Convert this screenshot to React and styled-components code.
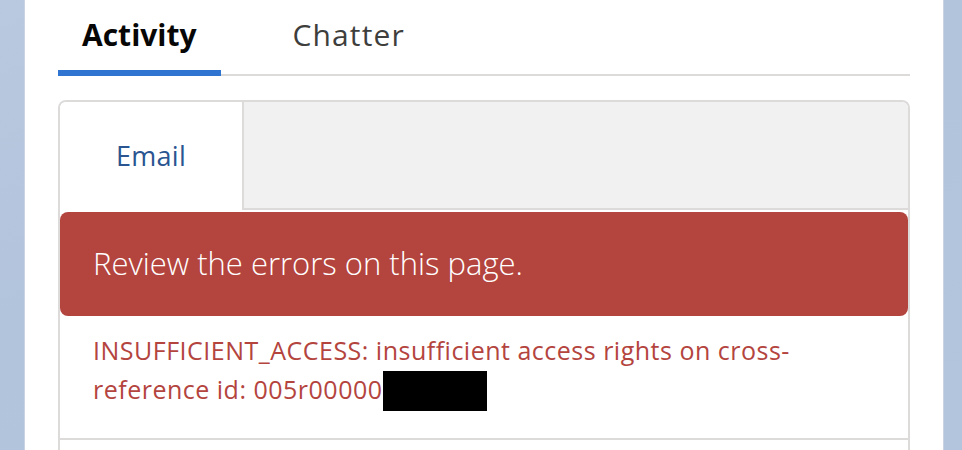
import React from "react"
import styled, { createGlobalStyle } from "styled-components"

const GlobalStyle = createGlobalStyle`
  html, body {
    margin: 0;
    padding: 0;
    background: #b3c4dd;
    font-family: "Open Sans", "Liberation Sans", sans-serif;
  }
`

const App = () => {
  return (
    <>
      <GlobalStyle />
      <Page>
        <Panel>
          <TabBar>
            <MainTab active>Activity</MainTab>
            <MainTab>Chatter</MainTab>
          </TabBar>
          <Card>
            <SubTabs>
              <SubTab>Email</SubTab>
              <SubTabFiller />
            </SubTabs>
            <ErrorBanner>Review the errors on this page.</ErrorBanner>
            <ErrorDetail>
              INSUFFICIENT_ACCESS: insufficient access rights on cross-
              <br />
              reference id: 005r00000
              <Redacted />
            </ErrorDetail>
            <NextRow />
          </Card>
        </Panel>
      </Page>
    </>
  )
}

const Page = styled.div`
  display: flex;
  height: 450px;
  overflow: hidden;
  padding: 0 18px 0 24px;
  background: linear-gradient(160deg, #b9c9df 0%, #b2c3dc 40%, #b3c4dd 100%);
`

const Panel = styled.main`
  flex: 1;
  background: #ffffff;
  border-left: 1px solid #c9d3e1;
  border-right: 1px solid #c9d3e1;
  padding: 0 33px;
  display: flex;
  flex-direction: column;
`

const TabBar = styled.nav`
  display: flex;
  gap: 48px;
  height: 76px;
  box-sizing: border-box;
  border-bottom: 2px solid #dddbda;
`

const MainTab = styled.div`
  padding: 0 24px 2px;
  height: 76px;
  box-sizing: border-box;
  display: flex;
  align-items: center;
  font-size: 30px;
  font-weight: ${(p) => (p.active ? 700 : 400)};
  letter-spacing: ${(p) => (p.active ? "0" : "1.1px")};
  color: ${(p) => (p.active ? "#080707" : "#3e3e3c")};
  border-bottom: 6px solid ${(p) => (p.active ? "#2e74d0" : "transparent")};
`

const Card = styled.section`
  margin-top: 24px;
  flex: 1;
  border: 2px solid #dddbda;
  border-bottom: none;
  border-radius: 8px 8px 0 0;
  overflow: hidden;
  display: flex;
  flex-direction: column;
`

const SubTabs = styled.div`
  display: flex;
  height: 108px;
`

const SubTab = styled.div`
  width: 182px;
  background: #ffffff;
  display: flex;
  align-items: center;
  justify-content: center;
  padding-bottom: 2px;
  font-size: 27px;
  letter-spacing: 0.3px;
  color: #2a5591;
`

const SubTabFiller = styled.div`
  flex: 1;
  background: #f1f1f1;
  border-left: 2px solid #dddbda;
  border-bottom: 2px solid #dddbda;
`

const ErrorBanner = styled.div`
  margin-top: 2px;
  height: 104px;
  box-sizing: border-box;
  background: #b4443e;
  border-radius: 8px;
  color: #ffffff;
  display: flex;
  align-items: center;
  padding: 0 33px 2px;
  font-size: 31px;
  font-weight: 300;
`

const ErrorDetail = styled.div`
  padding: 15px 33px 0;
  height: 124px;
  box-sizing: border-box;
  border-bottom: 2px solid #dddbda;
  font-size: 25px;
  letter-spacing: 0.5px;
  line-height: 39px;
  color: #b4443e;
`

const Redacted = styled.span`
  display: inline-block;
  width: 104px;
  height: 40px;
  background: #000000;
  vertical-align: -12px;
`

const NextRow = styled.div`
  flex: 1;
`

export default App
